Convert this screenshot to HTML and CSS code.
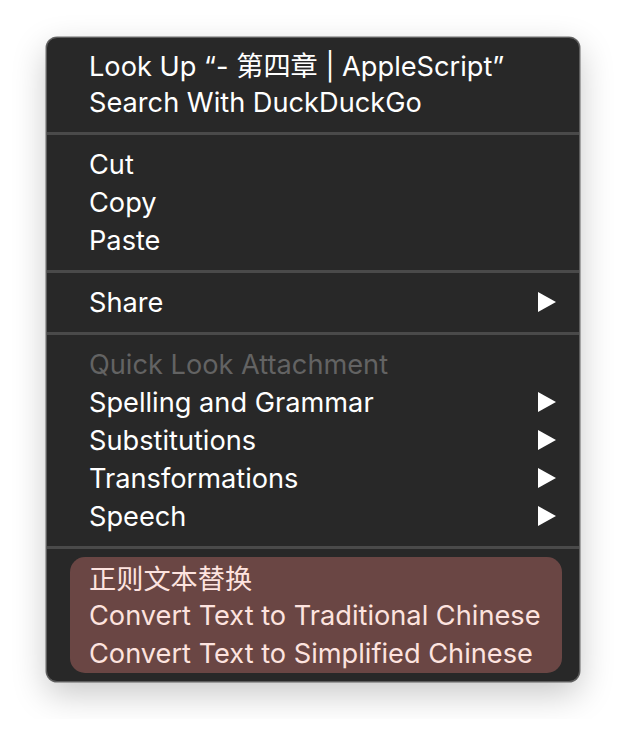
FILE: index.html
```html
<!DOCTYPE html>
<html>
<head>
<meta charset="utf-8">
<link rel="stylesheet" href="styles.css">
</head>
<body>
<div class="menu">
  <div class="item">Look Up “- 第四章 | AppleScript”</div>
  <div class="item">Search With DuckDuckGo</div>
  <div class="sep"></div>
  <div class="item">Cut</div>
  <div class="item">Copy</div>
  <div class="item">Paste</div>
  <div class="sep"></div>
  <div class="item">Share<svg class="arrow" viewBox="0 0 18 20"><polygon points="0,0 18,10 0,20"/></svg></div>
  <div class="sep"></div>
  <div class="item disabled">Quick Look Attachment</div>
  <div class="item">Spelling and Grammar<svg class="arrow" viewBox="0 0 18 20"><polygon points="0,0 18,10 0,20"/></svg></div>
  <div class="item">Substitutions<svg class="arrow" viewBox="0 0 18 20"><polygon points="0,0 18,10 0,20"/></svg></div>
  <div class="item">Transformations<svg class="arrow" viewBox="0 0 18 20"><polygon points="0,0 18,10 0,20"/></svg></div>
  <div class="item">Speech<svg class="arrow" viewBox="0 0 18 20"><polygon points="0,0 18,10 0,20"/></svg></div>
  <div class="sep last"></div>
  <div class="group">
    <div class="item">正则文本替换</div>
    <div class="item">Convert Text to Traditional Chinese</div>
    <div class="item">Convert Text to Simplified Chinese</div>
  </div>
</div>
</body>
</html>
```
FILE: styles.css
```css
html, body {
  margin: 0;
  background: #ffffff;
}
body {
  padding: 37px 46px;
  font-family: "Inter", "Noto Sans CJK SC", sans-serif;
}
.menu {
  width: 534px;
  box-sizing: border-box;
  background: #282828;
  border: 1px solid #5e5e5e;
  border-radius: 11px;
  padding: 7px 0 8px;
  box-shadow: 0 0 0 0.5px rgba(0,0,0,0.55), 0 12px 34px rgba(0,0,0,0.22);
}
.item {
  height: 38px;
  display: flex;
  align-items: center;
  justify-content: space-between;
  padding: 0 23px 0 42px;
  font-size: 27.2px;
  color: #ffffff;
  white-space: nowrap;
}
.item.disabled {
  color: #636363;
}
.arrow {
  width: 18px;
  height: 20px;
  fill: #ffffff;
  flex: none;
}
.sep {
  height: 3px;
  margin: 11px 0 10px;
  background: #4a4a4a;
}
.sep.last {
  margin-bottom: 8px;
}
.group {
  margin: 0 17px 0 23px;
  padding: 1px 0;
  background: #6a4644;
  border-radius: 15px;
}
.group .item {
  padding-left: 19px;
  color: #fde3df;
}
```
